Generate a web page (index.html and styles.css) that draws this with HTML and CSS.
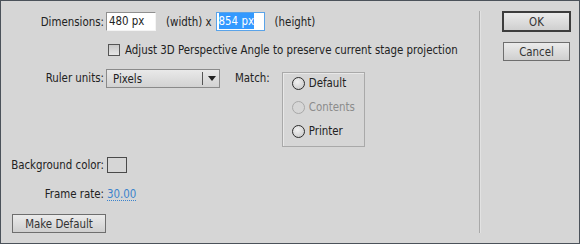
FILE: index.html
```html
<!DOCTYPE html>
<html lang="en">
<head>
  <meta charset="UTF-8">
  <title>Document Settings</title>
  <link rel="stylesheet" href="styles.css">
</head>
<body>
  <div class="dialog">
    <div class="main">
      <div class="row row-dims">
        <span class="label">Dimensions:</span>
        <div class="field">480 px</div>
        <span class="unit">(width)&nbsp;x</span>
        <div class="field focused"><span class="selection">854 px</span></div>
        <span class="unit">(height)</span>
      </div>

      <div class="row row-check">
        <span class="label"></span>
        <span class="checkbox"></span>
        <span class="check-text">Adjust 3D Perspective Angle to preserve current stage projection</span>
      </div>

      <div class="row row-ruler">
        <span class="label">Ruler units:</span>
        <div class="select">
          <span class="select-value">Pixels</span>
          <span class="select-arrow"></span>
        </div>
        <span class="match-label">Match:</span>
        <div class="match-box">
          <div class="radio-row"><span class="radio"></span>Default</div>
          <div class="radio-row disabled"><span class="radio"></span>Contents</div>
          <div class="radio-row"><span class="radio"></span>Printer</div>
        </div>
      </div>

      <div class="row row-bg">
        <span class="label">Background color:</span>
        <span class="swatch"></span>
      </div>

      <div class="row row-fps">
        <span class="label">Frame rate:</span>
        <span class="hot-text">30.00</span>
      </div>

      <div class="row row-default">
        <button class="btn btn-make">Make Default</button>
      </div>
    </div>

    <div class="divider"></div>

    <div class="side">
      <button class="btn btn-ok">OK</button>
      <button class="btn btn-cancel">Cancel</button>
    </div>
  </div>
</body>
</html>
```

FILE: styles.css
```css
body {
  margin: 0;
  background-color: #d6d6d6;
  font-family: 'DejaVu Sans Condensed', 'DejaVu Sans', sans-serif;
  font-size: 11.4px;
  color: #222;
}
.dialog {
  width: 578px;
  height: 242px;
  border: 1px solid #4b525a;
  background-color: #d6d6d6;
  display: flex;
}
.main {
  width: 478px;
  padding-top: 11px;
  display: flex;
  flex-direction: column;
}
.row {
  display: flex;
  align-items: center;
}
.label {
  width: 103px;
  text-align: right;
  flex-shrink: 0;
  margin-right: 2px;
}
.field {
  width: 46px;
  height: 17px;
  line-height: 17px;
  border: 1px solid #8f8f8f;
  border-bottom-color: #f4f4f4;
  border-right-color: #f4f4f4;
  background-color: #fff;
  padding-left: 2px;
}
.field.focused {
  border: 1px solid #5aa3e8;
  width: 45px;
}
.selection {
  background-color: #3399ff;
  color: #fff;
  padding: 1px 0;
}
.unit {
  margin-left: 10px;
  margin-right: 4px;
}
.row-dims .unit:last-child {
  margin-left: 10px;
}
.row-check {
  margin-top: 12px;
  height: 13px;
}
.checkbox {
  width: 10px;
  height: 10px;
  border: 1px solid #555;
  background: linear-gradient(#c9c9c9, #e6e6e6);
  margin-left: 2px;
  margin-right: 5px;
}
.row-ruler {
  margin-top: 13px;
  align-items: flex-start;
}
.row-ruler .label {
  line-height: 19px;
}
.select {
  width: 112px;
  height: 17px;
  border: 1px solid #8a8a8a;
  background: linear-gradient(#e9e9e9, #d2d2d2);
  display: flex;
  align-items: center;
}
.select-value {
  flex: 1;
  padding-left: 6px;
}
.select-arrow {
  width: 16px;
  height: 13px;
  border-left: 1px solid #555;
  position: relative;
}
.select-arrow::after {
  content: '';
  position: absolute;
  left: 5px;
  top: 4px;
  border-left: 4px solid transparent;
  border-right: 4px solid transparent;
  border-top: 5px solid #222;
}
.match-label {
  margin-left: 15px;
  line-height: 19px;
}
.match-box {
  margin-left: 12px;
  margin-top: 3px;
  width: 83px;
  height: 75px;
  border: 1px solid #a9a9a9;
  box-shadow: inset 1px 1px 0 #e8e8e8;
  box-sizing: border-box;
  display: flex;
  flex-direction: column;
  gap: 4px;
}
.radio-row {
  display: flex;
  align-items: center;
  height: 20px;
  padding-left: 9px;
}
.radio {
  width: 11px;
  height: 11px;
  border: 1px solid #2c2c2c;
  border-radius: 50%;
  background: radial-gradient(circle at 40% 35%, #f2f2f2, #c4c4c4);
  margin-right: 4px;
}
.radio-row.disabled {
  color: #8c8c8c;
}
.radio-row.disabled .radio {
  border-color: #a8a8a8;
  background: #d6d6d6;
}
.row-bg {
  margin-top: 10px;
}
.swatch {
  width: 18px;
  height: 14px;
  border: 1px solid #4a4a4a;
  background-color: #d6d6d6;
  margin-left: 1px;
}
.row-fps {
  margin-top: 14px;
}
.hot-text {
  color: #3b83cc;
  border-bottom: 1px dotted #3b83cc;
  margin-left: 1px;
  line-height: 12px;
}
.row-default {
  margin-top: 13px;
  padding-left: 11px;
}
.btn {
  font-family: inherit;
  font-size: 11.4px;
  color: #333;
  background: linear-gradient(#ebebeb, #cfcfcf);
  border: 1px solid #6e6e6e;
  padding: 0;
  height: 19px;
}
.btn-make {
  width: 94px;
}
.divider {
  width: 2px;
  margin-top: 10px;
  height: 222px;
  background-color: #a9a9a9;
  border-right: 1px solid #e2e2e2;
  box-sizing: border-box;
}
.side {
  padding-top: 10px;
  padding-left: 21px;
  display: flex;
  flex-direction: column;
  align-items: flex-start;
}
.btn-ok {
  width: 69px;
  height: 21px;
  border: 2px solid #3d3d3d;
}
.btn-cancel {
  width: 67px;
  margin-top: 10px;
  margin-left: 1px;
}
```
